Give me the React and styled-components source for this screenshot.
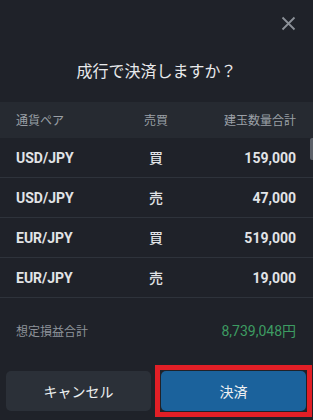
import React from "react";
import styled, { createGlobalStyle } from "styled-components";

const GlobalStyle = createGlobalStyle`
  html, body {
    margin: 0;
    padding: 0;
    background: #1f2229;
  }
  * {
    box-sizing: border-box;
  }
`;

const Modal = styled.div`
  position: relative;
  width: 313px;
  height: 420px;
  overflow: hidden;
  background: #1f2229;
  font-family: Roboto, "Noto Sans CJK JP", sans-serif;
  color: #e4e6e9;
`;

const CloseBar = styled.div`
  height: 46px;
  display: flex;
  justify-content: flex-end;
  align-items: center;
  padding-right: 17px;
`;

const CloseButton = styled.button`
  width: 16px;
  height: 16px;
  padding: 0;
  border: 0;
  background: none;
  display: flex;
  align-items: center;
  justify-content: center;
  cursor: pointer;
`;

const Title = styled.h2`
  margin: 0;
  height: 56px;
  padding-top: 14px;
  text-align: center;
  font-family: "Noto Sans CJK JP", sans-serif;
  font-size: 16px;
  font-weight: 400;
  line-height: 20px;
  color: #e8e9eb;
`;

const Table = styled.div`
  position: relative;
`;

const Grid = styled.div`
  display: grid;
  grid-template-columns: 1fr 56px 1fr;
  align-items: center;
  padding: 0 17px 0 16px;
`;

const HeadRow = styled(Grid)`
  height: 36px;
  background: #262a31;
  font-family: "Noto Sans CJK JP", sans-serif;
  font-size: 12px;
  color: #9ba0a7;
`;

const Row = styled(Grid)`
  height: 40px;
  border-bottom: 1px solid #2e333b;
  font-size: 14px;
  font-weight: 700;
  color: #e2e4e7;
  padding-top: 1px;
`;

const Cell = styled.span`
  text-align: ${(p) => p.$align || "left"};
  line-height: 16px;
`;

const Side = styled(Cell)`
  font-family: "Noto Sans CJK JP", sans-serif;
  font-weight: 500;
  font-size: 14px;
  line-height: 14px;
  margin-top: -2px;
`;

const ScrollThumb = styled.div`
  position: absolute;
  right: 0;
  top: 36px;
  width: 3px;
  height: 22px;
  border-radius: 2px 0 0 2px;
  background: #5b6068;
`;

const Summary = styled.div`
  height: 64px;
  display: flex;
  align-items: center;
  justify-content: space-between;
  padding: 0 17px 0 16px;
`;

const SummaryLabel = styled.span`
  font-family: "Noto Sans CJK JP", sans-serif;
  font-size: 12px;
  color: #8e939a;
`;

const SummaryValue = styled.span`
  font-size: 14px;
  color: #3d9c62;
  font-family: Roboto, "Noto Sans CJK JP", sans-serif;
`;

const Footer = styled.div`
  display: grid;
  grid-template-columns: 145px 145px;
  gap: 10px;
  padding: 9px 7px 0 6px;
`;

const Button = styled.button`
  position: relative;
  height: 40px;
  border: 0;
  border-radius: 5px;
  background: ${(p) => (p.$primary ? "#1b629c" : "#2b3038")};
  color: #eef0f2;
  font-family: "Noto Sans CJK JP", sans-serif;
  font-size: 14px;
  cursor: pointer;
  ${(p) =>
    p.$highlight &&
    `
    &::after {
      content: "";
      position: absolute;
      inset: -6px;
      border: 5px solid #e21f26;
      pointer-events: none;
    }
  `}
`;

const rows = [
  { pair: "USD/JPY", side: "買", qty: "159,000" },
  { pair: "USD/JPY", side: "売", qty: "47,000" },
  { pair: "EUR/JPY", side: "買", qty: "519,000" },
  { pair: "EUR/JPY", side: "売", qty: "19,000" },
];

export default function App() {
  return (
    <>
      <GlobalStyle />
      <Modal>
        <CloseBar>
          <CloseButton aria-label="close">
            <svg width="15" height="15" viewBox="0 0 15 15">
              <path
                d="M1.5 1.5 L13.5 13.5 M13.5 1.5 L1.5 13.5"
                stroke="#8b9097"
                strokeWidth="1.8"
                fill="none"
              />
            </svg>
          </CloseButton>
        </CloseBar>
        <Title>成行で決済しますか？</Title>
        <Table>
          <HeadRow>
            <Cell>通貨ペア</Cell>
            <Cell $align="center">売買</Cell>
            <Cell $align="right">建玉数量合計</Cell>
          </HeadRow>
          {rows.map((r, i) => (
            <Row key={i}>
              <Cell>{r.pair}</Cell>
              <Side $align="center">{r.side}</Side>
              <Cell $align="right">{r.qty}</Cell>
            </Row>
          ))}
          <ScrollThumb />
        </Table>
        <Summary>
          <SummaryLabel>想定損益合計</SummaryLabel>
          <SummaryValue>8,739,048円</SummaryValue>
        </Summary>
        <Footer>
          <Button>キャンセル</Button>
          <Button $primary $highlight>
            決済
          </Button>
        </Footer>
      </Modal>
    </>
  );
}
